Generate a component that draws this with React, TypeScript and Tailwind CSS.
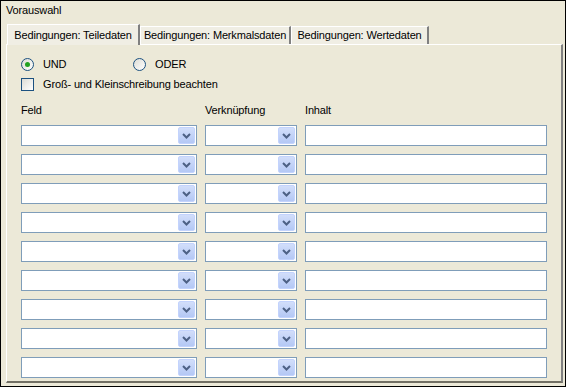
import React from "react";

const rows = Array.from({ length: 9 }, (_, i) => i);

function DropButton() {
  return (
    <div className="absolute right-[1px] top-[1px] bottom-[1px] w-[17px] rounded-[2px] bg-gradient-to-b from-[#D2DEFA] to-[#B4C8F5] border border-[#C3D3FD] flex items-center justify-center">
      <svg width="9" height="6" viewBox="0 0 9 6">
        <path d="M1 1 L4.5 4.5 L8 1" fill="none" stroke="#4D6185" strokeWidth="2" />
      </svg>
    </div>
  );
}

function Combo({ width }: { width: string }) {
  return (
    <div className={`relative h-[21px] ${width} border border-[#7F9DB9] bg-white`}>
      <DropButton />
    </div>
  );
}

function Radio({ checked, label }: { checked?: boolean; label: string }) {
  return (
    <div className="flex items-center gap-[9px]">
      <div className="w-[13px] h-[13px] rounded-full border border-[#1C5180] bg-gradient-to-br from-[#DCDCD5] to-white flex items-center justify-center">
        {checked && <div className="w-[5px] h-[5px] rounded-full bg-[#21A121]" />}
      </div>
      <span>{label}</span>
    </div>
  );
}

function Tab({ label, width, active }: { label: string; width: string; active?: boolean }) {
  return (
    <div
      className={
        active
          ? `h-[21px] ${width} flex items-center justify-center whitespace-nowrap border-t border-l border-white border-r-2 border-r-[#808080] bg-[#F0EEE4] relative -mb-[1px] z-10`
          : `h-[18px] ${width} flex items-center justify-center whitespace-nowrap border-t border-l border-white border-r-2 border-r-[#808080] bg-[#F0EEE4]`
      }
    >
      {label}
    </div>
  );
}

export default function App() {
  return (
    <div className="w-[566px] h-[387px] border border-black bg-[#ECE9D8] text-black text-[11px] leading-[13px] tracking-[-0.15px] font-['Liberation_Sans',Arial,sans-serif] overflow-hidden">
      <div className="pl-[5px] pt-[3px] h-[22px]">Vorauswahl</div>
      <div className="ml-[5px] w-[557px]">
        <div className="flex items-end h-[21px] pl-[1px]">
          <Tab label="Bedingungen: Teiledaten" width="w-[133px]" active />
          <Tab label="Bedingungen: Merkmalsdaten" width="w-[151px]" />
          <Tab label="Bedingungen: Wertedaten" width="w-[138px]" />
        </div>
        <div className="h-[339px] border-t border-l border-white border-r-2 border-r-[#808080] border-b-2 border-b-[#716F64] bg-[#ECE9D8] pl-[14px] pt-[13px]">
          <div className="flex items-center">
            <div className="w-[112px]">
              <Radio checked label="UND" />
            </div>
            <Radio label="ODER" />
          </div>
          <div className="flex items-center gap-[9px] mt-[7px]">
            <div className="w-[13px] h-[13px] border border-[#1C5180] bg-gradient-to-br from-[#DCDCD5] to-white" />
            <span>Groß- und Kleinschreibung beachten</span>
          </div>
          <div className="grid grid-cols-[176px_92px_242px] gap-x-[8px] mt-[13px]">
            <span>Feld</span>
            <span>Verknüpfung</span>
            <span>Inhalt</span>
          </div>
          <div className="flex flex-col gap-[8px] mt-[8px]">
            {rows.map((r) => (
              <div key={r} className="flex gap-[8px]">
                <Combo width="w-[176px]" />
                <Combo width="w-[92px]" />
                <div className="h-[21px] w-[242px] border border-[#7F9DB9] bg-white" />
              </div>
            ))}
          </div>
        </div>
      </div>
    </div>
  );
}
